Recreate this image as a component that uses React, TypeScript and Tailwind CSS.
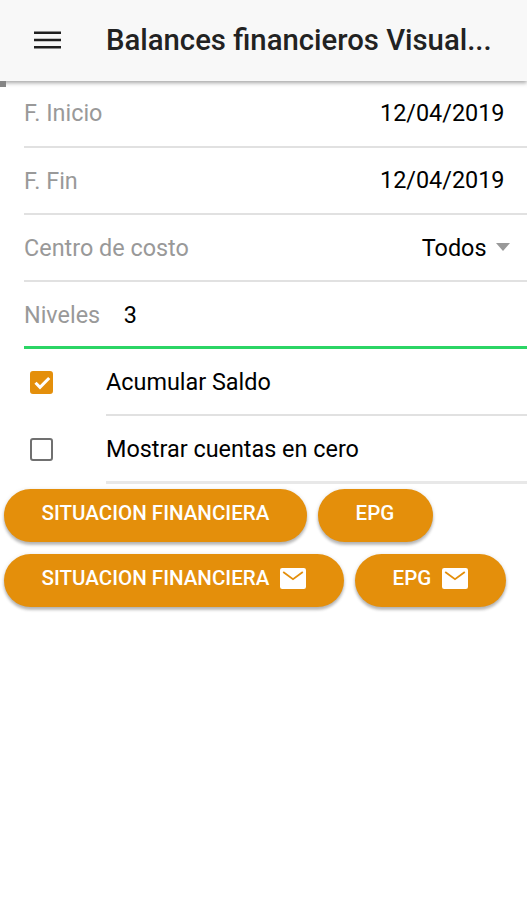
import { ReactNode, useState } from "react";

interface FilaProps {
    etiqueta: string;
    ajuste?: string;
    children: ReactNode;
}

function Fila({ etiqueta, ajuste = "", children }: FilaProps) {
    return (
        <div className={`ml-6 flex h-[67px] items-center justify-between border-b-2 border-[#e1e1e1] pr-[22.5px] ${ajuste}`}>
            <span className="text-[#999999]">{etiqueta}</span>
            {children}
        </div>
    );
}

interface OpcionProps {
    texto: string;
    marcada: boolean;
    borde: string;
    onCambio: () => void;
}

function Opcion({ texto, marcada, borde, onCambio }: OpcionProps) {
    return (
        <div className="flex h-[67px] pl-[30px]">
            <button
                type="button"
                role="checkbox"
                aria-checked={marcada}
                aria-label={texto}
                onClick={onCambio}
                className={`mt-[22px] flex size-[23px] shrink-0 items-center justify-center rounded-[3px] border-2 ${marcada ? "border-[#e48f0b] bg-[#e48f0b]" : "border-[#707070] bg-white"}`}
            >
                {marcada && (
                    <svg viewBox="0 0 23 23" className="size-[23px] shrink-0" fill="none" stroke="white" strokeWidth="3">
                        <path d="M5.5 11.8 10 16.4 19.2 7" />
                    </svg>
                )}
            </button>
            <div className={`ml-[53px] flex flex-1 items-center text-black ${borde}`}>{texto}</div>
        </div>
    );
}

function IconoCorreo() {
    return (
        <svg viewBox="0 0 26 21" className="mt-[-4px] ml-[11px] h-[21px] w-[26px]">
            <rect width="26" height="21" rx="2.2" fill="white" />
            <path d="M3.2 4 13 11.2 22.8 4" fill="none" stroke="#e48f0b" strokeWidth="1.8" />
        </svg>
    );
}

function Boton({ texto, ancho, correo }: { texto: string; ancho: string; correo?: boolean }) {
    return (
        <button
            type="button"
            className={`flex h-[53px] items-center rounded-full bg-[#e48f0b] pl-[37.6px] text-[20.55px] font-medium whitespace-nowrap text-white shadow-[0_3px_3px_rgba(0,0,0,0.22),0_1px_4px_rgba(0,0,0,0.15)] ${ancho}`}
        >
            <span className="-mt-[5px]">{texto}</span>
            {correo && <IconoCorreo />}
        </button>
    );
}

export default function App() {
    const [acumular, setAcumular] = useState(true);
    const [enCero, setEnCero] = useState(false);

    return (
        <div className="min-h-[900px] w-full overflow-hidden bg-white font-[Roboto,sans-serif] text-[23.4px] leading-[28px]">
            {/* BARRA SUPERIOR */}
            <header className="relative flex h-[81px] items-center bg-[#f8f8f8] pl-[34px] shadow-[0_2px_4px_rgba(0,0,0,0.35)]">
                <svg viewBox="0 0 27 18" className="-mt-px h-[18px] w-[27px] shrink-0" fill="#202020">
                    <path d="M0 0.5h27v2.6H0zM0 7.7h27v2.6H0zM0 14.9h27v2.6H0z" />
                </svg>
                <h1 className="-mt-px ml-[45px] text-[29.3px] font-medium whitespace-nowrap text-[#222222]">Balances financieros Visual...</h1>
                <div className="absolute top-[81px] left-0 h-[6px] w-[6px] bg-[#858585]" />
            </header>

            {/* FILTROS */}
            <Fila etiqueta="F. Inicio" ajuste="pb-[2px]">
                <span className="text-black">12/04/2019</span>
            </Fila>
            <Fila etiqueta="F. Fin">
                <span className="-mt-[2px] text-black">12/04/2019</span>
            </Fila>
            <Fila etiqueta="Centro de costo">
                <span className="-mr-[5px] flex items-center gap-[9px] text-black">
                    Todos
                    <svg viewBox="0 0 14 8" className="-mt-px h-[8px] w-[14px]" fill="#999999">
                        <path d="M0 0h14L7 8z" />
                    </svg>
                </span>
            </Fila>
            <div className="ml-6 flex h-[67px] items-center border-b-3 border-[#2bd565] pt-[2px]">
                <span className="text-[#999999]">Niveles</span>
                <span className="ml-[23.5px] text-black">3</span>
            </div>
            <Opcion texto="Acumular Saldo" marcada={acumular} borde="border-b-2 border-[#e1e1e1]" onCambio={() => setAcumular(!acumular)} />
            <Opcion texto="Mostrar cuentas en cero" marcada={enCero} borde="-mb-px border-b-3 border-[#e8e8e8]" onCambio={() => setEnCero(!enCero)} />

            {/* REPORTES */}
            <div className="mt-[6px] ml-1 flex gap-[11px]">
                <Boton texto="SITUACION FINANCIERA" ancho="w-[303px]" />
                <Boton texto="EPG" ancho="w-[115px]" />
            </div>
            <div className="mt-[11.5px] ml-1 flex gap-[11px]">
                <Boton texto="SITUACION FINANCIERA" ancho="w-[340px]" correo />
                <Boton texto="EPG" ancho="w-[151px]" correo />
            </div>
        </div>
    );
}
